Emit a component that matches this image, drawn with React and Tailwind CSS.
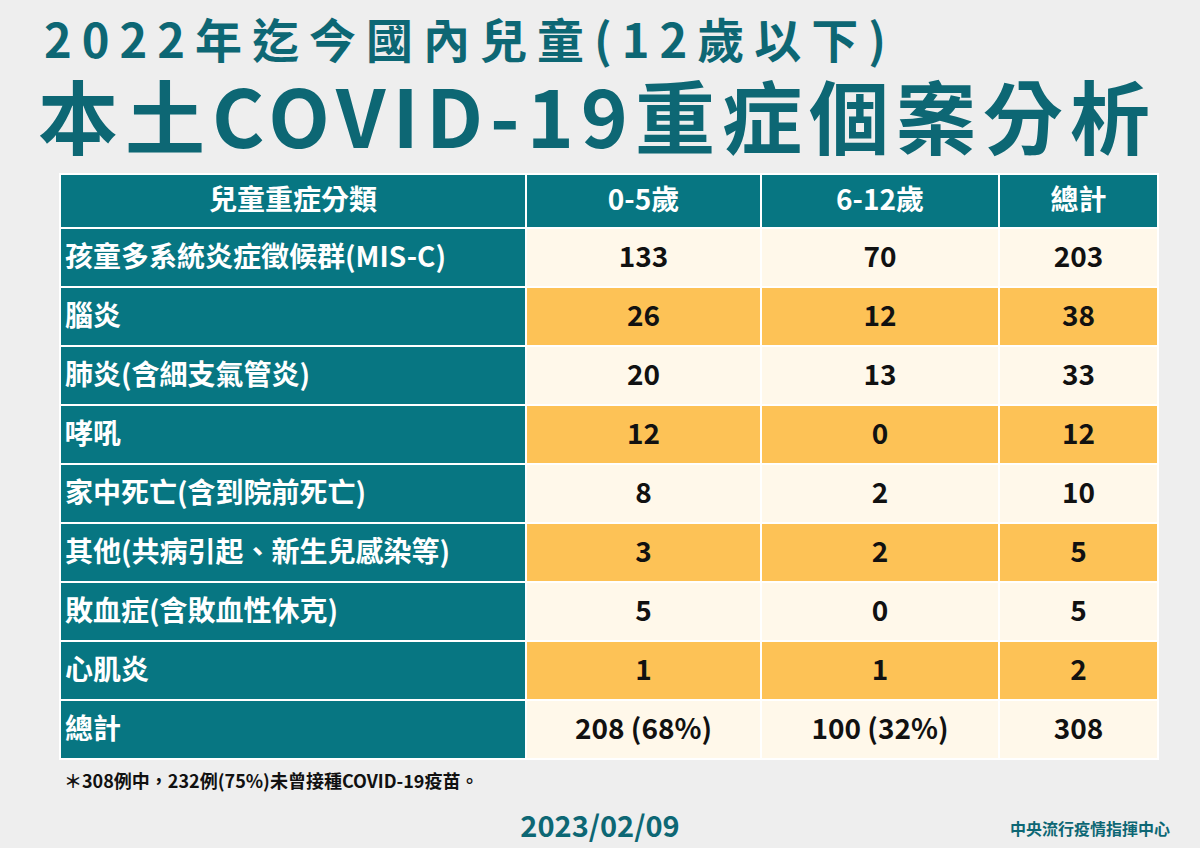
const rows = [
  { name: '孩童多系統炎症徵候群(MIS-C)', a: '133', b: '70', t: '203' },
  { name: '腦炎', a: '26', b: '12', t: '38' },
  { name: '肺炎(含細支氣管炎)', a: '20', b: '13', t: '33' },
  { name: '哮吼', a: '12', b: '0', t: '12' },
  { name: '家中死亡(含到院前死亡)', a: '8', b: '2', t: '10' },
  { name: '其他(共病引起、新生兒感染等)', a: '3', b: '2', t: '5' },
  { name: '敗血症(含敗血性休克)', a: '5', b: '0', t: '5' },
  { name: '心肌炎', a: '1', b: '1', t: '2' },
  { name: '總計', a: '208 (68%)', b: '100 (32%)', t: '308' },
];

const font = { fontFamily: '"Noto Sans CJK TC", "Noto Sans", sans-serif' };

export default function App() {
  return (
    <div
      className="w-[1200px] h-[848px] bg-[#eeeeee] flex flex-col items-center overflow-hidden"
      style={font}
    >
      {/* 標題 */}
      <div className="w-full pl-[44px] pt-[8px] text-[#0d6774] font-bold whitespace-nowrap">
        <div className="text-[47px] leading-[60px] tracking-[10px]">
          2022年迄今國內兒童(12歲以下)
        </div>
        <div className="text-[80px] leading-[90px] tracking-[7px] -ml-[6px]">
          本土COVID-19重症個案分析
        </div>
      </div>

      {/* 表格 */}
      <div className="mt-[15px] ml-[18px] grid grid-cols-[464px_233px_236px_157px] grid-rows-[52px_repeat(9,57px)] gap-[2px] p-[2px] bg-white font-bold text-[28px] leading-[40px]">
        <div className="bg-[#077682] text-white flex items-center justify-center pb-[6px]">兒童重症分類</div>
        <div className="bg-[#077682] text-white flex items-center justify-center pb-[6px]">0-5歲</div>
        <div className="bg-[#077682] text-white flex items-center justify-center pb-[6px]">6-12歲</div>
        <div className="bg-[#077682] text-white flex items-center justify-center pb-[6px]">總計</div>
        {rows.map((r, i) => {
          const cell = i % 2 === 1 ? 'bg-[#fdc256]' : 'bg-[#fff8ea]';
          return [
            <div key={r.name} className="bg-[#077682] text-white flex items-center pl-[4px] pb-[6px]">{r.name}</div>,
            <div key={r.name + 'a'} className={`${cell} text-[#111] flex items-center justify-center pb-[6px]`}>{r.a}</div>,
            <div key={r.name + 'b'} className={`${cell} text-[#111] flex items-center justify-center pb-[6px]`}>{r.b}</div>,
            <div key={r.name + 't'} className={`${cell} text-[#111] flex items-center justify-center pb-[6px]`}>{r.t}</div>,
          ];
        })}
      </div>

      <div className="w-full pl-[64px] mt-[6px] text-[18px] leading-[28px] font-bold text-[#111]">
        ＊308例中，232例(75%)未曾接種COVID-19疫苗。
      </div>

      <div className="w-full relative mt-[10px] h-[44px]">
        <div className="text-center text-[29px] leading-[40px] font-bold text-[#0d6774]">2023/02/09</div>
        <div className="absolute right-[30px] top-[13px] text-[16px] leading-[22px] font-bold text-[#0d6774]">
          中央流行疫情指揮中心
        </div>
      </div>
    </div>
  );
}
